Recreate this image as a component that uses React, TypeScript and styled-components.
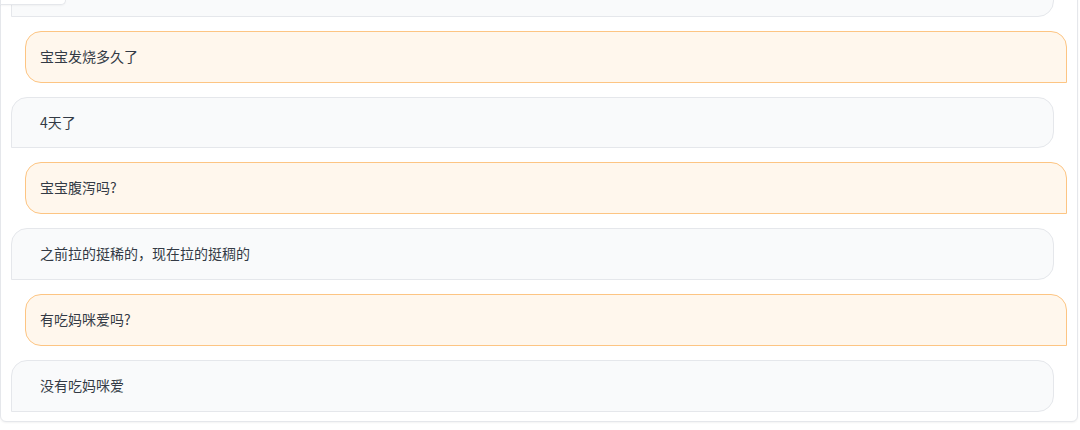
import React from 'react';
import styled, { createGlobalStyle, css } from 'styled-components';

const GlobalStyle = createGlobalStyle`
    html, body {
        margin: 0;
        padding: 0;
        background: #ffffff;
        overflow: hidden;
    }
    body {
        font-family: "Noto Sans CJK SC", "Noto Sans", sans-serif;
    }
`;

const Page = styled.div`
    position: relative;
    width: 1080px;
    height: 430px;
    overflow: hidden;
`;

// small tab left over from the panel above, mostly scrolled out of view
const Tab = styled.div`
    position: absolute;
    top: 0;
    left: 0;
    width: 64px;
    height: 4px;
    background: #ffffff;
    border: 1px solid #e5e7eb;
    border-top: none;
    border-radius: 0 0 6px 0;
    box-shadow: 0 1px 2px rgba(0, 0, 0, 0.04);
    z-index: 2;
`;

const Card = styled.div`
    width: 1078px;
    box-sizing: border-box;
    margin-top: -46px;
    padding: 10px 10px 9px 10px;
    border: 1px solid #e5e7eb;
    border-radius: 6px;
    background: #ffffff;
    box-shadow: 0 1px 2px rgba(0, 0, 0, 0.05);
    display: flex;
    flex-direction: column;
    gap: 14px;
`;

const Bubble = styled.div<{ $role: 'doctor' | 'patient' }>`
    min-height: 19.8px;
    box-sizing: content-box;
    padding: 15px 14px;
    font-size: 14px;
    line-height: 19.8px;
    color: #333a45;
    border-width: 1px;
    border-style: solid;

    ${({ $role }) =>
        $role === 'doctor'
            ? css`
                  width: 1012px;
                  align-self: flex-end;
                  background: #fff7ed;
                  border-color: #fdc583;
                  border-radius: 16px 16px 0 16px;
              `
            : css`
                  width: 999px;
                  align-self: flex-start;
                  padding-left: 28px;
                  background: #f9fafb;
                  border-color: #e5e7eb;
                  border-radius: 16px 16px 16px 0;
              `}
`;

const messages: { role: 'doctor' | 'patient'; text: string }[] = [
    { role: 'patient', text: '' },
    { role: 'doctor', text: '宝宝发烧多久了' },
    { role: 'patient', text: '4天了' },
    { role: 'doctor', text: '宝宝腹泻吗?' },
    { role: 'patient', text: '之前拉的挺稀的，现在拉的挺稠的' },
    { role: 'doctor', text: '有吃妈咪爱吗?' },
    { role: 'patient', text: '没有吃妈咪爱' },
];

const App: React.FC = () => {
    return (
        <>
            <GlobalStyle />
            <Page>
                <Tab />
                <Card>
                    {messages.map((m, i) => (
                        <Bubble key={i} $role={m.role}>
                            {m.text}
                        </Bubble>
                    ))}
                </Card>
            </Page>
        </>
    );
};

export default App;
